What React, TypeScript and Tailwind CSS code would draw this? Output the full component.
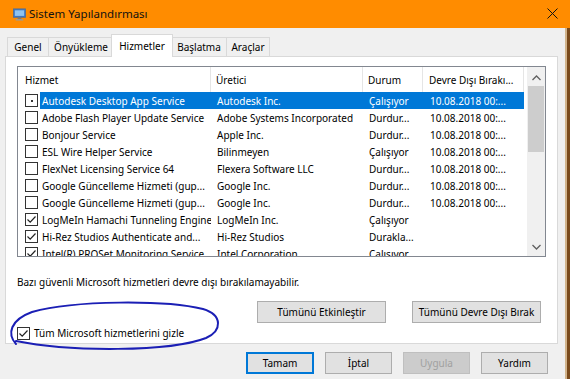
const rows = [
  { name: "Autodesk Desktop App Service", maker: "Autodesk Inc.", state: "Çalışıyor", date: "10.08.2018 00:...", mark: "dot", selected: true },
  { name: "Adobe Flash Player Update Service", maker: "Adobe Systems Incorporated", state: "Durdur...", date: "10.08.2018 00:..." },
  { name: "Bonjour Service", maker: "Apple Inc.", state: "Durdur...", date: "10.08.2018 00:..." },
  { name: "ESL Wire Helper Service", maker: "Bilinmeyen", state: "Çalışıyor", date: "10.08.2018 00:..." },
  { name: "FlexNet Licensing Service 64", maker: "Flexera Software LLC", state: "Durdur...", date: "10.08.2018 00:..." },
  { name: "Google Güncelleme Hizmeti (gup...", maker: "Google Inc.", state: "Durdur...", date: "10.08.2018 00:..." },
  { name: "Google Güncelleme Hizmeti (gup...", maker: "Google Inc.", state: "Durdur...", date: "10.08.2018 00:..." },
  { name: "LogMeIn Hamachi Tunneling Engine", maker: "LogMeIn Inc.", state: "Çalışıyor", date: "", mark: "check" },
  { name: "Hi-Rez Studios Authenticate and...", maker: "Hi-Rez Studios", state: "Durakla...", date: "", mark: "check" },
  { name: "Intel(R) PROSet Monitoring Service", maker: "Intel Corporation", state: "Çalışıyor", date: "", mark: "check" },
];

const CheckBox = ({ mark }: { mark?: string }) => (
  <div className="w-[13px] h-[13px] border border-[#333] bg-white flex items-center justify-center shrink-0">
    {mark === "dot" && <div className="w-[2px] h-[2px] bg-[#333]" />}
    {mark === "check" && (
      <svg width="11" height="11" viewBox="0 0 11 11">
        <path d="M1.5 5.5 L4.2 8.2 L9.5 2.5" fill="none" stroke="#222" strokeWidth="1.2" />
      </svg>
    )}
  </div>
);

const Tab = ({ label, w, active }: { label: string; w: string; active?: boolean }) =>
  active ? (
    <div className={`${w} h-[23px] -mb-px -mx-[2px] border border-b-0 border-[#d9d9d9] bg-white flex items-center justify-center z-10`}>{label}</div>
  ) : (
    <div className={`${w} h-[19px] border border-b-0 border-[#d9d9d9] bg-[#f0f0f0] flex items-center justify-center -mr-px`}>{label}</div>
  );

const Button = ({ label, w, focus, disabled }: { label: string; w: string; focus?: boolean; disabled?: boolean }) => (
  <div
    className={`${w} h-[22px] flex items-center justify-center ${
      focus ? "border-2 border-[#0078d7] bg-[#e1e1e1]" : disabled ? "border border-[#bfbfbf] bg-[#cccccc] text-[#a0a0a0]" : "border border-[#adadad] bg-[#e1e1e1]"
    }`}
  >
    {label}
  </div>
);

export default function App() {
  return (
    <div className="w-[570px] h-[379px] relative overflow-hidden bg-[#f0f0f0] text-[10px] text-black font-['Noto_Sans',sans-serif] leading-[14px]">
      {/* title bar */}
      <div className="h-[28px] bg-[#ff8c00] flex items-center relative">
        <svg className="ml-[13px]" width="13" height="13" viewBox="0 0 14 13">
          <rect x="0.5" y="0.5" width="13" height="9" fill="#3a78c8" stroke="#5a6e8c" />
          <rect x="2" y="2" width="10" height="6" fill="#8fc3f0" />
          <rect x="5" y="10" width="4" height="1.5" fill="#7a7a7a" />
          <rect x="3" y="11.5" width="8" height="1.5" fill="#9a9a9a" />
        </svg>
        <span className="ml-[3px] text-[11.5px] text-[#111]">Sistem Yapılandırması</span>
        <svg className="absolute left-[547px] top-[8px]" width="11" height="11" viewBox="0 0 11 11">
          <path d="M0.5 0.5 L10.5 10.5 M10.5 0.5 L0.5 10.5" stroke="#111" strokeWidth="1" />
        </svg>
      </div>

      <div className="flex h-[351px]">
        <div className="w-[565px] flex flex-col">
          {/* tabs */}
          <div className="flex items-end pl-[7px] pt-[6px] h-[28px]">
            <Tab label="Genel" w="w-[42px]" />
            <Tab label="Önyükleme" w="w-[66px]" />
            <Tab label="Hizmetler" w="w-[62px]" active />
            <Tab label="Başlatma" w="w-[56px]" />
            <Tab label="Araçlar" w="w-[44px]" />
          </div>

          {/* panel */}
          <div className="ml-[5px] w-[553px] h-[288px] border border-[#d9d9d9] bg-white pl-[11px] pt-[9px]">
            <div className="w-[529px] h-[191px] border border-[#828790] flex overflow-hidden">
              <div className="w-[509px] flex flex-col">
                <div className="h-[25px] shrink-0 flex items-center">
                  <div className="w-[193px] pl-[7px] h-full flex items-center border-r border-[#e5e5e5]">Hizmet</div>
                  <div className="w-[152px] pl-[5px] h-full flex items-center border-r border-[#e5e5e5]">Üretici</div>
                  <div className="w-[60px] pl-[5px] h-full flex items-center border-r border-[#e5e5e5]">Durum</div>
                  <div className="w-[101px] pl-[6px] h-full flex items-center border-r border-[#e5e5e5] whitespace-nowrap">Devre Dışı Bırakı...</div>
                </div>
                {rows.map((r, i) => (
                  <div key={i} className="h-[17px] shrink-0 flex items-center">
                    <div className="w-[22px] pl-[7px] shrink-0">
                      <CheckBox mark={r.mark} />
                    </div>
                    <div className={`flex items-center h-full w-[484px] ${r.selected ? "bg-[#0078d7] text-white" : ""}`}>
                      <div className="w-[171px] pl-[2px] whitespace-nowrap overflow-hidden">{r.name}</div>
                      <div className="w-[152px] pl-[6px] whitespace-nowrap overflow-hidden">{r.maker}</div>
                      <div className="w-[60px] pl-[6px] whitespace-nowrap overflow-hidden">{r.state}</div>
                      <div className="w-[101px] pl-[7px] whitespace-nowrap overflow-hidden">{r.date}</div>
                    </div>
                  </div>
                ))}
              </div>
              {/* scrollbar */}
              <div className="w-[18px] bg-[#f0f0f0] flex flex-col items-center">
                <svg className="mt-[8px]" width="9" height="6" viewBox="0 0 9 6">
                  <path d="M0.5 5 L4.5 1 L8.5 5" fill="none" stroke="#606060" strokeWidth="1.3" />
                </svg>
                <div className="mt-[5px] w-[16px] h-[66px] bg-[#cdcdcd]" />
                <div className="flex-1" />
                <svg className="mb-[6px]" width="9" height="6" viewBox="0 0 9 6">
                  <path d="M0.5 1 L4.5 5 L8.5 1" fill="none" stroke="#606060" strokeWidth="1.3" />
                </svg>
              </div>
            </div>

            <div className="mt-[18px]">Bazı güvenli Microsoft hizmetleri devre dışı bırakılamayabilir.</div>

            <div className="mt-[12px] flex pl-[240px] gap-[26px]">
              <Button label="Tümünü Etkinleştir" w="w-[129px]" />
              <Button label="Tümünü Devre Dışı Bırak" w="w-[129px]" />
            </div>

            <div className="mt-[3px] flex items-center gap-[4px]">
              <CheckBox mark="check" />
              <span>Tüm Microsoft hizmetlerini gizle</span>
            </div>
          </div>

          {/* dialog buttons */}
          <div className="mt-[8px] flex pl-[246px] gap-[11px]">
            <Button label="Tamam" w="w-[68px]" focus />
            <Button label="İptal" w="w-[67px]" />
            <Button label="Uygula" w="w-[67px]" disabled />
            <Button label="Yardım" w="w-[67px]" />
          </div>
        </div>
        <div className="w-[5px] border-l-2 border-[#d2b48c] bg-[#7a4a1c]" />
      </div>

      {/* hand-drawn marker ring */}
      <svg className="absolute left-0 top-0 pointer-events-none" width="570" height="379" viewBox="0 0 570 379">
        <path
          d="M16 344 C7 334 10 320 32 312 C75 300 165 300 203 309 C223 315 222 331 206 338 C170 352 70 352 16 341"
          fill="none"
          stroke="#1b1fb5"
          strokeWidth="2"
          strokeLinecap="round"
        />
      </svg>
    </div>
  );
}
